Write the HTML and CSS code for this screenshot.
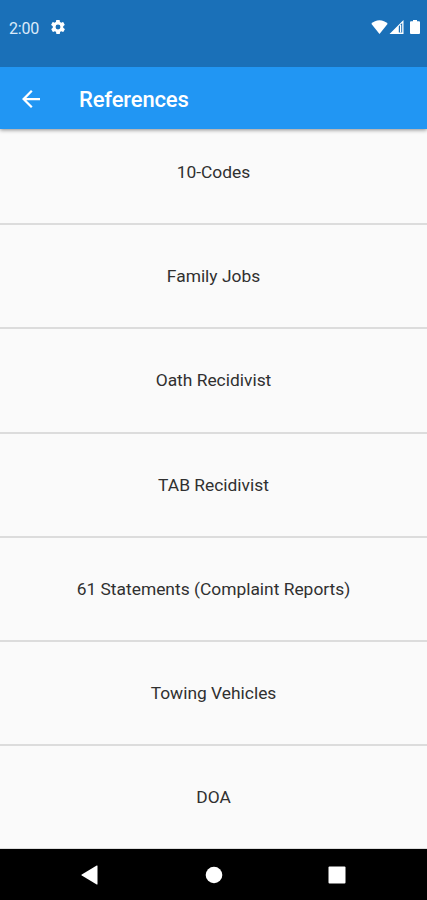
FILE: index.html
```html
<!DOCTYPE html>
<html lang="en">
<head>
  <meta charset="UTF-8" />
  <meta name="viewport" content="width=device-width, initial-scale=1.0"/>
  <title>References</title>
  <link rel="stylesheet" href="styles.css">
</head>
<body>

  <!-- Status bar -->
  <div class="status-bar">
    <span class="time">2:00</span>
    <svg class="gear" viewBox="2 2 20 20"><path d="M19.4 13c0-.3.1-.6.1-1s0-.7-.1-1l2.1-1.7c.2-.1.2-.4.1-.6l-2-3.5c-.1-.2-.4-.3-.6-.2l-2.500 1c-.5-.4-1.100-.7-1.700-1l-.4-2.600c0-.2-.2-.4-.5-.4h-4c-.2 0-.5.2-.5.4l-.4 2.600c-.6.3-1.200.6-1.700 1l-2.500-1c-.2-.1-.5 0-.6.2l-2 3.500c-.1.2-.1.5.1.6L4.600 11c0 .3-.1.6-.1 1s0 .7.1 1l-2.100 1.700c-.2.1-.2.4-.1.6l2 3.500c.1.2.4.3.6.2l2.500-1c.5.4 1.100.7 1.700 1l.4 2.600c0 .2.2.4.5.4h4c.2 0 .5-.2.5-.4l.4-2.600c.6-.3 1.200-.6 1.700-1l2.500 1c.2.1.5 0 .6-.2l2-3.500c.1-.2.1-.5-.1-.6L19.400 13zM12 15.500a3.500 3.500 0 1 1 0-7 3.500 3.500 0 0 1 0 7z"/></svg>
    <div class="status-icons">
      <svg class="wifi" viewBox="0 0 17 14"><path d="M8.500 14L.3 3.800C2.500 1.600 5.300.3 8.500.3s6 1.300 8.200 3.500z"/></svg>
      <svg class="signal" viewBox="0 0 15 14"><path fill-rule="evenodd" d="M14.500 0v14H.5zM9.800 6.300v6.200h3.400V2.900z"/><path d="M11 5h1.200v7.500H11z"/></svg>
      <svg class="battery" viewBox="0 0 10 14"><path d="M3 0h4v1.300h2q1 0 1 1V13q0 1-1 1H1q-1 0-1-1V2.300q0-1 1-1h2z"/></svg>
    </div>
  </div>

  <!-- App bar -->
  <div class="app-bar">
    <svg class="back" viewBox="4 4 16 16"><path d="M20 11H7.830l5.590-5.590L12 4l-8 8 8 8 1.410-1.410L7.830 13H20v-2z"/></svg>
    <h1>References</h1>
  </div>

  <ul class="list">
    <li>10-Codes</li>
    <li>Family Jobs</li>
    <li>Oath Recidivist</li>
    <li>TAB Recidivist</li>
    <li>61 Statements (Complaint Reports)</li>
    <li>Towing Vehicles</li>
    <li>DOA</li>
  </ul>

  <!-- System navigation -->
  <div class="nav-bar">
    <svg viewBox="0 0 18 20"><path d="M16.500.8v18.400q-.2.500-.8.200L.8 10.600q-.9-.6 0-1.200L15.700.6q.6-.3.8.2z"/></svg>
    <svg viewBox="0 0 18 20"><circle cx="9" cy="10" r="8.300"/></svg>
    <svg viewBox="0 0 18 20"><rect x=".5" y="1.500" width="17" height="17" rx="1"/></svg>
  </div>

</body>
</html>
```
FILE: styles.css
```css
body {
  font-family: Roboto, "Liberation Sans", sans-serif;
  background-color: #fafafa;
  margin: 0;
  height: 900px;
  display: flex;
  flex-direction: column;
  overflow: hidden;
}

svg {
  display: block;
  fill: #fff;
}

.status-bar {
  display: flex;
  align-items: center;
  box-sizing: border-box;
  height: 67px;
  flex-shrink: 0;
  padding: 0 7px 13px 9px;
  background-color: #1a70b8;
  color: #dceafa;
  z-index: 2;
}

.time {
  margin-top: 2px;
  font-size: 16px;
  letter-spacing: -0.2px;
}

.gear {
  width: 14px;
  height: 14px;
  margin-left: 12px;
}

.status-icons {
  display: flex;
  margin-left: auto;
}

.wifi {
  width: 17px;
  height: 14px;
}

.signal {
  width: 15px;
  height: 14px;
  margin-left: 1px;
}

.battery {
  width: 10px;
  height: 14px;
  margin-left: 6px;
}

.app-bar {
  display: flex;
  align-items: center;
  height: 62px;
  flex-shrink: 0;
  padding-left: 22px;
  background-color: #2196f3;
  box-shadow: 0 1px 4px rgba(0,0,0,0.45);
  z-index: 1;
}

.back {
  width: 18px;
  height: 18px;
  margin-top: 1px;
}

h1 {
  margin: 2px 0 0 39px;
  font-size: 22px;
  font-weight: 500;
  letter-spacing: -0.15px;
  color: #fff;
}

.list {
  flex: 1;
  list-style: none;
  margin: 0;
  padding: 0;
  overflow: hidden;
}

.list li {
  display: flex;
  align-items: center;
  justify-content: center;
  box-sizing: border-box;
  height: 104.2px;
  border-bottom: 2px solid #dcdcdc;
  font-size: 17.4px;
  color: #303030;
}

/* the first row sits partly under the app bar */
.list li:first-child {
  margin-top: -8px;
}

.nav-bar {
  display: flex;
  align-items: center;
  justify-content: space-between;
  height: 51px;
  flex-shrink: 0;
  padding: 0 81px;
  background-color: #000;
}

.nav-bar svg {
  width: 18px;
  height: 20px;
}
```
